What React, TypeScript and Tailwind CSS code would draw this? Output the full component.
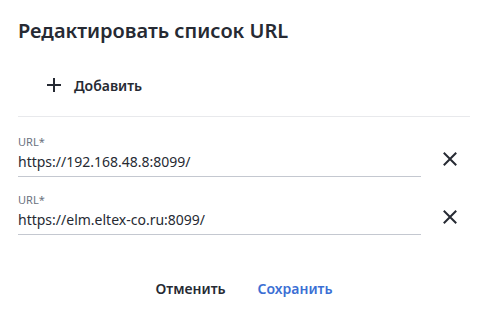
import React from "react";

const Field = ({ value }: { value: string }) => (
  <div className="flex items-center">
    <div className="w-[403px]">
      <div className="text-[11px] leading-[14px] text-[#6b7280]">URL*</div>
      <div className="h-[28px] pb-[2px] flex items-center border-b border-[#c4c8d0] text-[14px] text-[#262a33]">
        {value}
      </div>
    </div>
    <div className="ml-[22px] w-[14px] h-[14px] mt-[6px] flex items-center justify-center">
      <svg width="14" height="14" viewBox="0 0 14 14">
        <path d="M1.5 1.5 L12.5 12.5 M12.5 1.5 L1.5 12.5" stroke="#262a33" strokeWidth="2" strokeLinecap="square" />
      </svg>
    </div>
  </div>
);

export default function App() {
  return (
    <div className="w-[481px] h-[310px] bg-white font-['Noto_Sans',sans-serif] text-[#262a33] flex flex-col">
      <h2 className="ml-[18px] mt-[17px] text-[20px] leading-[28px] font-semibold">Редактировать список URL</h2>
      <div className="ml-[47px] mt-[27px] h-[26px] flex items-center gap-[13px]">
        <svg width="14" height="14" viewBox="0 0 14 14">
          <path d="M7 0 V14 M0 7 H14" stroke="#262a33" strokeWidth="2" />
        </svg>
        <span className="text-[14px] font-semibold">Добавить</span>
      </div>
      <div className="ml-[18px] mr-[11px] mt-[18px] border-t border-[#e8e9ec]" />
      <div className="ml-[18px] mt-[18px] flex flex-col gap-[16px]">
        <Field value="https://192.168.48.8:8099/" />
        <Field value="https://elm.eltex-co.ru:8099/" />
      </div>
      <div className="mt-auto mb-[10px] flex justify-center gap-[32px] text-[14px] font-semibold pl-[7px]">
        <span className="h-[24px] flex items-center">Отменить</span>
        <span className="h-[24px] flex items-center text-[#3b6fd4]">Сохранить</span>
      </div>
    </div>
  );
}
